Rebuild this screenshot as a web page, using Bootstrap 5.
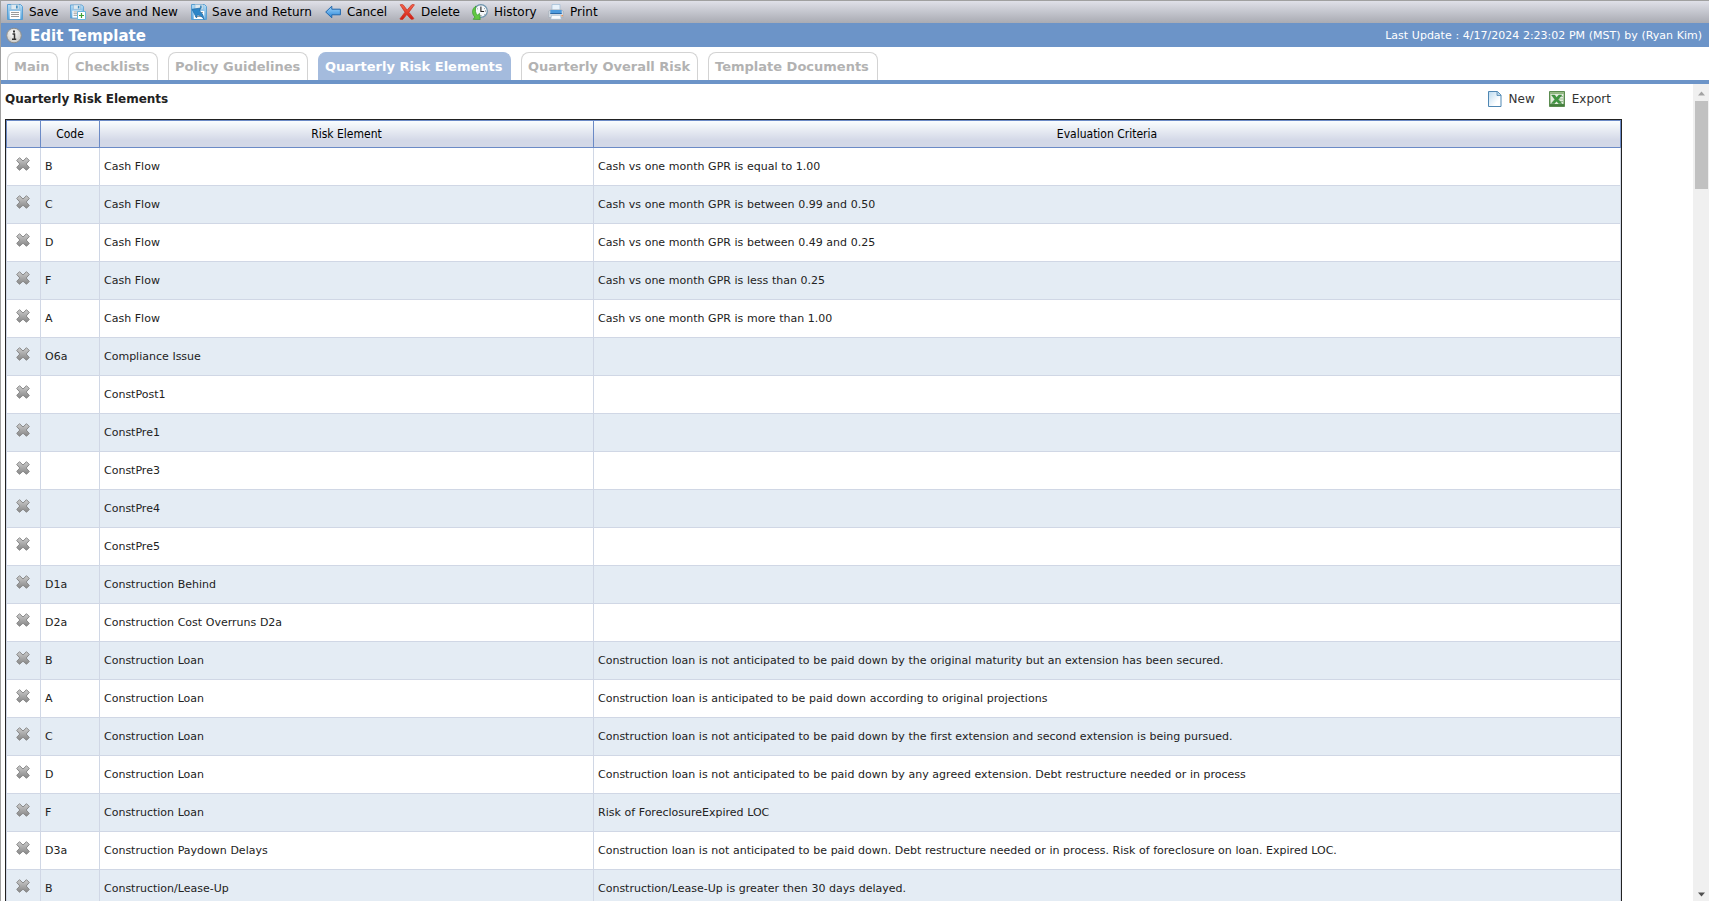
<!DOCTYPE html>
<html lang="en">
<head>
<meta charset="utf-8">
<meta name="viewport" content="width=device-width, initial-scale=1">
<title>Edit Template</title>
<link rel="stylesheet" href="https://cdn.jsdelivr.net/npm/bootstrap@5.3.0/dist/css/bootstrap.min.css">
<style>
  body { font-family: Verdana, "DejaVu Sans", sans-serif; font-size: 11px; color: #222; background: #fff; font-variant-ligatures: none; }
  .app { height: 100vh; border-top: 1px solid #a0a0a0; border-left: 1px solid #a0a0a0; }
  .toolbar { height: 22px; padding-left: 6px; background: linear-gradient(#dfe0e8, #a9abb3); font-size: 12px; color: #000; }
  .tool { gap: 6px; height: 22px; line-height: 20px; padding: 0; border: 0; background: none; color: inherit; white-space: nowrap; }
  .tool svg, .action svg { width: 16px; height: 16px; flex: none; }
  .w-save { width: 63px; } .w-new { width: 121px; } .w-return { width: 134px; gap: 5px; letter-spacing: .03px; }
  .w-cancel { width: 74px; letter-spacing: -.1px; } .w-delete { width: 73px; letter-spacing: -.1px; } .w-history { width: 76px; }
  .titlebar { height: 24px; padding: 0 7px 0 4px; background: #6c94c8; color: #fff; }
  .titlebar h1 { font-size: 15px; font-weight: 700; line-height: 24px; margin: 1px 0 0 8px; }
  .titlebar .stamp { line-height: 22px; padding-top: 1px; word-spacing: .2px; }
  .tabstrip { height: 37px; padding: 5px 0 0 6px; gap: 10px; border-bottom: 4px solid #6c94c8; flex: none; }
  .tabstrip .nav-link { height: 28px; line-height: 28px; padding: 0 0 0 6px; border: 1px solid #d3d3d3; border-bottom: 0; border-radius: 8px 8px 0 0; font-size: 13px; font-weight: 700; color: #b2b2b2; white-space: nowrap; }
  .tabstrip .nav-link.active { background: #a4bbdd; border-color: #a4bbdd; color: #fff; }
  .heading { width: 1610px; height: 35px; padding: 7px 4px 0 0; }
  .heading h2 { font-size: 12px; font-weight: 700; line-height: 16px; margin: 0; letter-spacing: -.03px; }
  .action { font-size: 12px; line-height: 16px; color: #333; gap: 7px; height: 16px; }
  .pane { padding-left: 4px; min-width: 0; min-height: 0; }
  .grid { width: 1617px; table-layout: fixed; border-collapse: separate; border-spacing: 0; border: 1px solid #222; margin: 0; }
  .grid th { height: 28px; padding: 0; text-align: center; font: 12px/16px "DejaVu Sans Condensed", "DejaVu Sans", sans-serif; color: #000; background: linear-gradient(#fafdfe, #d3d8e7 75%, #d3d8e7); border: 1px solid #6b8ac6; border-right-width: 0; }
  .grid td { height: 38px; padding: 0 4px; line-height: 15px; border-left: 1px solid #d0d7e5; border-bottom: 1px solid #d0d7e5; white-space: nowrap; word-spacing: .15px; }
  .grid th:last-child { border-right-width: 1px; }
  .grid td:last-child { border-right: 1px solid #d0d7e5; }
  .grid td:first-child { padding: 0 0 5px 9px; line-height: 0; }
  .grid tbody tr:nth-child(even) td { background: #e4ecf4; }
  .grid td svg { width: 14px; height: 14px; }
  .scroll-track { width: 16px; background: #f0f0f0; padding: 7px 1px 4px 2px; flex: none; }
  .scroll-thumb { height: 88px; width: 13px; margin-top: 5px; background: #c1c1c1; }
  .scroll-track svg { display: block; width: 7px; height: 5px; margin-left: 3px; }
</style>
<script src="https://cdn.jsdelivr.net/npm/bootstrap@5.3.0/dist/js/bootstrap.bundle.min.js"></script>
</head>
<body class="overflow-hidden">
<svg width="0" height="0" class="position-absolute">
  <defs>
    <linearGradient id="gDisk" x2="0" y2="1"><stop stop-color="#b8def6"/><stop offset="1" stop-color="#55a2dc"/></linearGradient>
    <linearGradient id="gArrow" x2="0" y2="1"><stop stop-color="#a5d8fb"/><stop offset="1" stop-color="#2784d8"/></linearGradient>
    <linearGradient id="gRed" x2="0" y2="1"><stop stop-color="#f7674f"/><stop offset="1" stop-color="#cf1a12"/></linearGradient>
    <linearGradient id="gGray" x2="0" y2="1"><stop stop-color="#ccc"/><stop offset="1" stop-color="#858585"/></linearGradient>
    <linearGradient id="gPage" x2="1" y2="1"><stop stop-color="#b9d9ef"/><stop offset=".7" stop-color="#fff"/></linearGradient>
    <linearGradient id="gXls" x2="0" y2="1"><stop stop-color="#9dbf8c"/><stop offset="1" stop-color="#3d7a36"/></linearGradient>
    <radialGradient id="gInfo" cx=".45" cy=".35"><stop stop-color="#fff"/><stop offset="1" stop-color="#d2d2d0"/></radialGradient>
    <symbol id="disk" viewBox="0 0 16 16">
      <path d="M.5.5h13l2 2v13H.5z" fill="url(#gDisk)" stroke="#5a9fd2"/>
      <path d="M4 .5h8v5H4z" fill="#dfe9f0" stroke="#8fb5d1" stroke-width=".6"/><path d="M9 1.5h1.7v3H9z" fill="#438dbd"/>
      <path d="M2.700 7h10.600v8H2.700z" fill="#fff"/><path d="M4 8.500h8M4 10.500h8M4 12.500h8" stroke="#9a9a9a"/>
    </symbol>
    <symbol id="cross" viewBox="0 0 14 14">
      <path d="M3.500.7 7 4 10.500.7l2.800 2.800L10.200 7l3.100 3.500-2.800 2.800L7 10.200l-3.500 3.100L.7 10.500 3.800 7 .7 3.500z" fill="url(#gGray)" stroke="#888" stroke-width="1" stroke-linejoin="round"/>
    </symbol>
  </defs>
</svg>

<div class="app d-flex flex-column">
  <div class="toolbar d-flex flex-shrink-0">
    <button class="tool w-save d-flex align-items-center"><svg><use href="#disk"/></svg>Save</button>
    <button class="tool w-new d-flex align-items-center">
      <svg viewBox="0 0 16 16"><use href="#disk" width="14" height="15"/><path d="M7.500 7.500h8v8h-8z" fill="#fff" stroke="#68b6dc"/><path d="M11.500 9v5M9 11.500h5" stroke="#3fa234" stroke-width="1.200"/></svg>Save and New</button>
    <button class="tool w-return d-flex align-items-center">
      <svg viewBox="0 0 16 16"><use href="#disk" width="16" height="16"/><path d="M1 5.300 9.500 4 8.700 7c2 1.600 4 4.300 4.300 8.300C11 12.300 8.500 11.200 6.300 11l-.8 3z" fill="#2d86c8" stroke="#1c69a5" stroke-width=".7"/></svg>Save and Return</button>
    <button class="tool w-cancel d-flex align-items-center">
      <svg viewBox="0 0 16 16"><path d="M.7 8 6.800 2.200v3h8.600v5.600H6.800v3z" fill="url(#gArrow)" stroke="#2268ad" stroke-linejoin="round"/></svg>Cancel</button>
    <button class="tool w-delete d-flex align-items-center">
      <svg viewBox="0 0 16 16"><path d="M1.200.8C3 .2 4.300.6 5.200 2.200l2.900 4L12.500 1c.8-.8 2-.6 2.900-.2L9.900 8.300l5 6.200c-.8.9-2.500 1.200-3.300.3L7.800 10.400l-3.900 4.900c-1 .6-2.300.2-3-.3L6 8.200z" fill="url(#gRed)" stroke="#cb3422" stroke-width=".8"/></svg>Delete</button>
    <button class="tool w-history d-flex align-items-center">
      <svg viewBox="0 0 16 16"><circle cx="8.900" cy="7" r="6.400" fill="#f5f8fa" stroke="#6d94ad" stroke-width="1.200"/><path d="M8.900 3v4.500h3.200" fill="none" stroke="#222" stroke-width="1.100"/><path d="M8.900 1.800v.8M13.900 7h-.8M8.900 11.300v.9M5 4.500l.5.3M12.700 4.500l-.5.3M12.200 10.200l.4.3" stroke="#445"/><path d="M4 2C.8 4 .1 7 .7 9.500c.4 1.600 1.300 2.700 2.300 3.500l-1.800 2.300 7 .2-.7-6.200-1.900 1.900C3.300 9.300 2.800 6 4 2z" fill="#63c842" stroke="#379b2b" stroke-width=".7"/></svg>History</button>
    <button class="tool d-flex align-items-center">
      <svg viewBox="0 0 16 16"><path d="M4 .5h8V8H4z" fill="#e8f2fb" stroke="#9dbbd6" stroke-width=".7"/><path d="M.7 7 3 5.800h10L15.300 7v6.500H.7z" fill="#d6dce4" stroke="#a4adb8" stroke-width=".7"/><path d="M2.300 6h11.400v3.700H2.300z" fill="#4b9ade"/><path d="M2.300 9.500h11.400" stroke="#2967a5"/><path d="M3.500 11.300h9l.8 4H2.700z" fill="#f8fbfe" stroke="#9db6cc" stroke-width=".7"/><path d="M13.500 11h1.300v1.400h-1.300z" fill="#f28235"/></svg>Print</button>
  </div>

  <div class="titlebar d-flex align-items-center flex-shrink-0">
    <svg width="17" height="17" viewBox="0 0 17 17"><circle cx="9" cy="8.500" r="7.300" fill="url(#gInfo)" stroke="#8e8e8b"/><path d="M7.500 7h2v4.700M7 12.200h4.200" fill="none" stroke="#333" stroke-width="1.500"/><path d="M8 3.600h2v1.900H8z" fill="#333"/></svg>
    <h1>Edit Template</h1>
    <span class="stamp ms-auto">Last Update : 4/17/2024 2:23:02 PM (MST) by (Ryan Kim)</span>
  </div>

  <nav class="tabstrip nav flex-nowrap">
    <a class="nav-link" style="width:51px">Main</a>
    <a class="nav-link" style="width:90px">Checklists</a>
    <a class="nav-link" style="width:140px">Policy Guidelines</a>
    <a class="nav-link active" style="width:193px">Quarterly Risk Elements</a>
    <a class="nav-link" style="width:177px">Quarterly Overall Risk</a>
    <a class="nav-link" style="width:170px">Template Documents</a>
  </nav>

  <div class="d-flex flex-grow-1 overflow-hidden">
    <main class="pane flex-grow-1 overflow-hidden">
      <div class="heading d-flex align-items-start">
        <h2>Quarterly Risk Elements</h2>
        <div class="action d-flex ms-auto">
          <svg viewBox="0 0 16 16"><path d="M.5.500H9.500l3.500 3.500v11.500H.5z" fill="url(#gPage)" stroke="#4f87b3"/><path d="M9 .5V4.500h4" fill="#b5d5ea" stroke="#4f87b3" stroke-width=".8"/></svg>
          <span style="margin-left:-2px">New</span>
        </div>
        <div class="action d-flex" style="margin-left:14px">
          <svg viewBox="0 0 16 16"><path d="M.5.500h15v15H.5z" fill="url(#gXls)" stroke="#5b8c50"/><path d="M1.500 3h13v10h-13z" fill="#e3eedd"/><path d="M10 5.500h4M10 8h4M10 10.500h4" stroke="#9ab994"/><path d="M2.500 4h3.200l1.900 2.600L9.800 4h3L9.300 8.400l3.600 4.100H9.600L7.500 10.200l-2 2.300H2.300l3.500-4.100z" fill="#3f9640" stroke="#2d7430" stroke-width=".4"/></svg>
          <span>Export</span>
        </div>
      </div>

      <table class="grid">
        <colgroup><col style="width:34px"><col style="width:59px"><col style="width:494px"><col></colgroup>
        <thead><tr><th></th><th>Code</th><th>Risk Element</th><th>Evaluation Criteria</th></tr></thead>
        <tbody>
          <tr><td><svg><use href="#cross"/></svg></td><td>B</td><td>Cash Flow</td><td>Cash vs one month GPR is equal to 1.00</td></tr>
          <tr><td><svg><use href="#cross"/></svg></td><td>C</td><td>Cash Flow</td><td>Cash vs one month GPR is between 0.99 and 0.50</td></tr>
          <tr><td><svg><use href="#cross"/></svg></td><td>D</td><td>Cash Flow</td><td>Cash vs one month GPR is between 0.49 and 0.25</td></tr>
          <tr><td><svg><use href="#cross"/></svg></td><td>F</td><td>Cash Flow</td><td>Cash vs one month GPR is less than 0.25</td></tr>
          <tr><td><svg><use href="#cross"/></svg></td><td>A</td><td>Cash Flow</td><td>Cash vs one month GPR is more than 1.00</td></tr>
          <tr><td><svg><use href="#cross"/></svg></td><td>O6a</td><td>Compliance Issue</td><td></td></tr>
          <tr><td><svg><use href="#cross"/></svg></td><td></td><td>ConstPost1</td><td></td></tr>
          <tr><td><svg><use href="#cross"/></svg></td><td></td><td>ConstPre1</td><td></td></tr>
          <tr><td><svg><use href="#cross"/></svg></td><td></td><td>ConstPre3</td><td></td></tr>
          <tr><td><svg><use href="#cross"/></svg></td><td></td><td>ConstPre4</td><td></td></tr>
          <tr><td><svg><use href="#cross"/></svg></td><td></td><td>ConstPre5</td><td></td></tr>
          <tr><td><svg><use href="#cross"/></svg></td><td>D1a</td><td>Construction Behind</td><td></td></tr>
          <tr><td><svg><use href="#cross"/></svg></td><td>D2a</td><td>Construction Cost Overruns D2a</td><td></td></tr>
          <tr><td><svg><use href="#cross"/></svg></td><td>B</td><td>Construction Loan</td><td>Construction loan is not anticipated to be paid down by the original maturity but an extension has been secured.</td></tr>
          <tr><td><svg><use href="#cross"/></svg></td><td>A</td><td>Construction Loan</td><td>Construction loan is anticipated to be paid down according to original projections</td></tr>
          <tr><td><svg><use href="#cross"/></svg></td><td>C</td><td>Construction Loan</td><td>Construction loan is not anticipated to be paid down by the first extension and second extension is being pursued.</td></tr>
          <tr><td><svg><use href="#cross"/></svg></td><td>D</td><td>Construction Loan</td><td>Construction loan is not anticipated to be paid down by any agreed extension. Debt restructure needed or in process</td></tr>
          <tr><td><svg><use href="#cross"/></svg></td><td>F</td><td>Construction Loan</td><td>Risk of ForeclosureExpired LOC</td></tr>
          <tr><td><svg><use href="#cross"/></svg></td><td>D3a</td><td>Construction Paydown Delays</td><td>Construction loan is not anticipated to be paid down. Debt restructure needed or in process. Risk of foreclosure on loan. Expired LOC.</td></tr>
          <tr><td><svg><use href="#cross"/></svg></td><td>B</td><td>Construction/Lease-Up</td><td>Construction/Lease-Up is greater then 30 days delayed.</td></tr>
        </tbody>
      </table>
    </main>
    <div class="scroll-track d-flex flex-column">
      <svg viewBox="0 0 7 5"><path d="M0 4.500 3.500.500 7 4.500z" fill="#a3a3a3"/></svg>
      <div class="scroll-thumb"></div>
      <svg class="mt-auto" viewBox="0 0 7 5"><path d="M0 .5h7L3.500 4.500z" fill="#505050"/></svg>
    </div>
  </div>
</div>
</body>
</html>
